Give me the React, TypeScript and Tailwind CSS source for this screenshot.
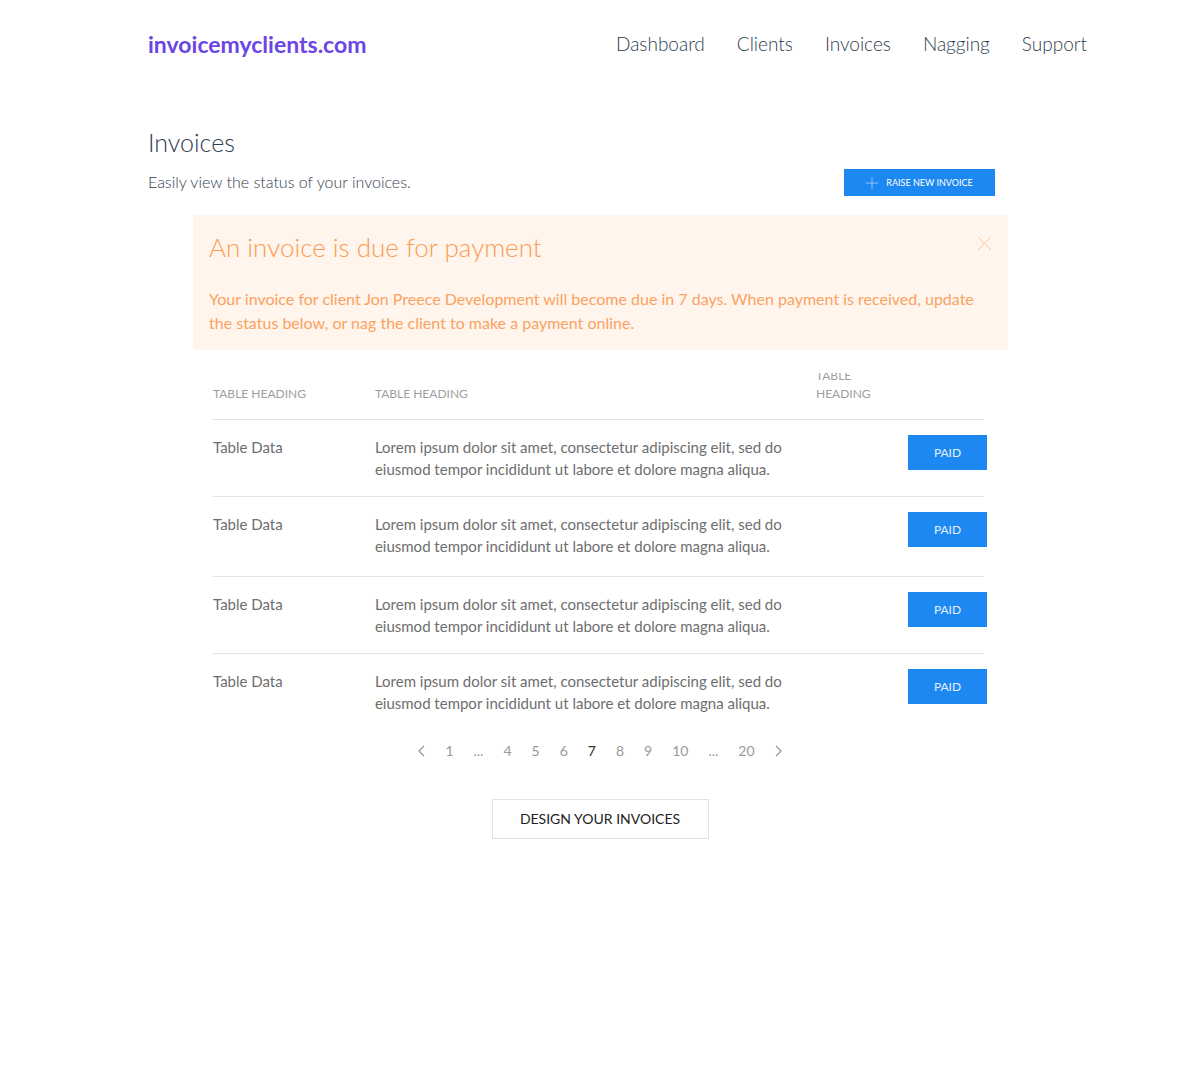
const navLinks = ["Dashboard", "Clients", "Invoices", "Nagging", "Support"];

const pages = ["1", "...", "4", "5", "6", "7", "8", "9", "10", "...", "20"];

const description =
  "Lorem ipsum dolor sit amet, consectetur adipiscing elit, sed do eiusmod tempor incididunt ut labore et dolore magna aliqua.";

const rowGroups = [
  [1, 2],
  [3, 4],
];

function Header() {
  return (
    <header className="flex flex-wrap items-center justify-between gap-4 pt-7">
      <a href="#" className="text-[23px] leading-8 font-bold text-[#6b46e5]">
        invoicemyclients.com
      </a>
      <nav className="flex flex-wrap gap-8 text-[19px] leading-8 font-light text-[#2f3d4f]">
        {navLinks.map((link) => (
          <a key={link} href="#">
            {link}
          </a>
        ))}
      </nav>
    </header>
  );
}

function Alert() {
  return (
    <section
      role="alert"
      className="flex items-start justify-between bg-[#fff5ec] px-4 pt-4 pb-[15px] text-[#fba262]"
    >
      <div className="min-w-0 flex-1">
        <h2 className="text-[26px] leading-8 font-light text-[#fb9a50]">
          An invoice is due for payment
        </h2>
        <p className="mt-6 text-[16px] leading-6">
          Your invoice for client Jon Preece Development will become due in 7 days. When payment is
          received, update the status below, or nag the client to make a payment online.
        </p>
      </div>
      <button type="button" aria-label="Dismiss" className="-ml-4 mt-1 text-[#fcc499]">
        <svg width="16" height="16" viewBox="0 0 16 16" fill="none" stroke="currentColor">
          <path d="M2 2L15 15M15 2L2 15" />
        </svg>
      </button>
    </section>
  );
}

function InvoiceTable() {
  return (
    <table className="w-full table-fixed border-collapse text-left text-[#6e6e6e]">
      <colgroup>
        <col className="w-[21%]" />
        <col />
        <col className="w-[89px]" />
        <col className="w-[79px]" />
      </colgroup>
      <thead className="text-[12px] leading-[18px] text-[#9e9e9e]">
        <tr className="border-b border-[#e2e2e2] align-bottom">
          <th className="pb-4 font-normal">TABLE HEADING</th>
          <th className="pb-4 font-normal">TABLE HEADING</th>
          <th className="pb-4 font-normal">
            <div className="flex h-[30px] w-14 flex-col justify-end overflow-hidden">
              TABLE HEADING
            </div>
          </th>
          <td />
        </tr>
      </thead>
      {rowGroups.map((group, index) => (
        <tbody key={index} className="group text-[15px] leading-[22px]">
          {group.map((row) => (
            <tr
              key={row}
              className="h-[77px] border-b border-[#e2e2e2] align-top last:h-20 group-last:last:border-b-0"
            >
              <td className="pt-4">Table Data</td>
              <td className="pt-4">
                <p className="max-w-[424px]">{description}</p>
              </td>
              <td />
              <td className="pt-[15px]">
                <button
                  type="button"
                  className="ml-[3px] block h-[35px] w-[79px] bg-[#1e88f2] text-[12px] text-[#e3f0fd]"
                >
                  PAID
                </button>
              </td>
            </tr>
          ))}
        </tbody>
      ))}
    </table>
  );
}

function Pagination() {
  return (
    <nav
      aria-label="Pagination"
      className="flex items-center justify-center gap-5 text-[14px] leading-6 text-[#999999]"
    >
      <button type="button" aria-label="Previous page">
        <svg
          width="8"
          height="12"
          viewBox="0 0 8 12"
          fill="none"
          stroke="currentColor"
          strokeWidth="1.3"
        >
          <path d="M7 1L2 6L7 11" />
        </svg>
      </button>
      {pages.map((page, index) =>
        page === "..." ? (
          <span key={index}>...</span>
        ) : (
          <a
            key={index}
            href="#"
            aria-current={page === "7" ? "page" : undefined}
            className="aria-[current=page]:text-[#333333]"
          >
            {page}
          </a>
        ),
      )}
      <button type="button" aria-label="Next page">
        <svg
          width="8"
          height="12"
          viewBox="0 0 8 12"
          fill="none"
          stroke="currentColor"
          strokeWidth="1.3"
        >
          <path d="M1 1L6 6L1 11" />
        </svg>
      </button>
    </nav>
  );
}

export default function App() {
  return (
    <div className="mx-auto max-w-[1200px] bg-white pb-12 font-['Lato',sans-serif]">
      <div className="pr-[113px] pl-[148px]">
        <Header />
      </div>
      <main>
        <div className="flex flex-wrap items-end justify-between gap-4 pt-16 pr-[205px] pl-[148px] text-[#2f3d4f]">
          <div>
            <h1 className="text-[25px] leading-9 font-light">Invoices</h1>
            <p className="mt-2 text-[16px] leading-7 font-light">
              Easily view the status of your invoices.
            </p>
          </div>
          <button
            type="button"
            className="flex h-[27px] w-[151px] items-center justify-center gap-2 bg-[#1e88f2] text-[9px] text-white"
          >
            <svg
              width="12"
              height="12"
              viewBox="0 0 12 12"
              fill="none"
              stroke="#8fc3f8"
              aria-hidden="true"
            >
              <path d="M6 0V12M0 6H12" />
            </svg>
            RAISE NEW INVOICE
          </button>
        </div>
        <div className="mt-[19px] pr-48 pl-[193px]">
          <Alert />
          <div className="mt-[23px] pr-6 pl-5">
            <InvoiceTable />
          </div>
        </div>
        <div className="mt-[5px]">
          <Pagination />
        </div>
        <div className="mt-9 flex justify-center">
          <button
            type="button"
            className="h-10 w-[217px] border border-[#e2e2e2] text-[14px] text-[#222222]"
          >
            DESIGN YOUR INVOICES
          </button>
        </div>
      </main>
    </div>
  );
}
